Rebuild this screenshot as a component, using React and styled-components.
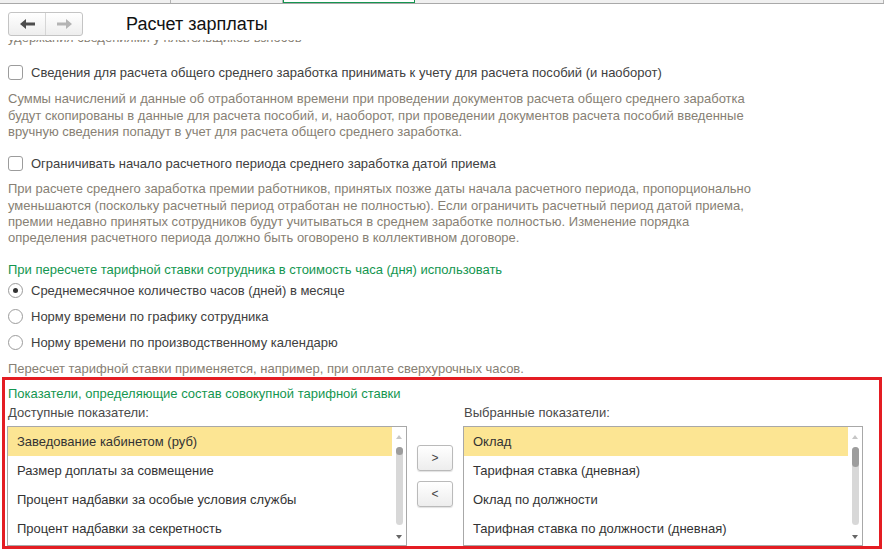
import React from 'react';
import styled, { createGlobalStyle, css } from 'styled-components';

const GlobalStyle = createGlobalStyle`
  html, body {
    margin: 0;
    padding: 0;
    background: #fff;
  }
  body {
    font-family: "Liberation Sans", Arial, sans-serif;
    font-size: 13px;
    color: #404040;
    overflow: hidden;
  }
`;

const GREEN = '#149650';
const HINT = '#877f74';

const Page = styled.div`
  width: 884px;
  height: 558px;
  display: flex;
  flex-direction: column;
  overflow: hidden;
  background: #fff;
`;

const TabStrip = styled.div`
  display: flex;
  height: 3px;
  background: #f0f0f0;
  border-bottom: 1px solid #a9a9a9;
`;

const Tab = styled.div`
  width: ${p => (p.$w ? `${p.$w}px` : 'auto')};
  flex: ${p => (p.$w ? 'none' : '1')};
  border-right: 1px solid #b4b4b4;
  ${p => p.$active && css`
    background: #fff;
    border-left: 1px solid ${GREEN};
    border-right: 1px solid ${GREEN};
    border-bottom: 1px solid ${GREEN};
    margin-right: 2px;
  `}
`;

const Header = styled.div`
  box-sizing: border-box;
  height: 36px;
  padding: 4px 8px 0;
  display: flex;
  align-items: center;
  gap: 43px;
`;

const NavGroup = styled.div`
  display: flex;
  height: 24px;
  box-sizing: border-box;
  border: 1px solid #c4c4c4;
  border-radius: 3px;
  background: linear-gradient(#ffffff, #eeeeee);
`;

const NavButton = styled.div`
  width: 36px;
  display: flex;
  align-items: center;
  justify-content: center;
  & + & {
    border-left: 1px solid #d6d6d6;
  }
`;

const Title = styled.div`
  font-size: 18px;
  color: #111;
`;

const Content = styled.div`
  flex: 1;
  overflow: hidden;
  padding: 0 8px;
  display: flex;
  flex-direction: column;
`;

const Hint = styled.div`
  color: ${HINT};
  line-height: 16.33px;
  margin-top: ${p => p.$mt || 0}px;
  white-space: nowrap;
`;

const OptionRow = styled.label`
  display: flex;
  align-items: center;
  gap: 8px;
  height: ${p => p.$h || 18}px;
  margin-top: ${p => p.$mt || 0}px;
  color: #404040;
`;

const CheckBox = styled.span`
  width: 15px;
  height: 15px;
  box-sizing: border-box;
  border: 1px solid #9c9c9c;
  border-radius: 3px;
  background: #fff;
`;

const Radio = styled.span`
  width: 15px;
  height: 15px;
  box-sizing: border-box;
  border: 1px solid #9c9c9c;
  border-radius: 50%;
  background: #fff;
  display: flex;
  align-items: center;
  justify-content: center;
  &::after {
    content: '';
    width: 5px;
    height: 5px;
    border-radius: 50%;
    background: ${p => (p.$checked ? '#333' : 'transparent')};
  }
`;

const GroupTitle = styled.div`
  color: ${GREEN};
  line-height: 16px;
  margin-top: ${p => p.$mt || 0}px;
  padding-left: ${p => p.$pl || 0}px;
`;

const Panel = styled.div`
  margin: 0 -6px;
  border: 3px solid #e41d23;
  padding: 6px 16px 0 2px;
`;

const Columns = styled.div`
  display: grid;
  grid-template-columns: 400px 36px 400px;
  column-gap: 10px;
  margin-top: 3px;
`;

const ListColumn = styled.div`
  display: flex;
  flex-direction: column;
`;

const ListLabel = styled.div`
  line-height: 16px;
  padding-left: 1px;
  color: #4a4a4a;
`;

const ListBox = styled.div`
  margin-top: 5px;
  height: 120px;
  box-sizing: border-box;
  border: 1px solid #a8a8a8;
  display: flex;
  background: #fff;
`;

const Rows = styled.div`
  flex: 1;
  display: flex;
  flex-direction: column;
`;

const Row = styled.div`
  height: 29px;
  flex: none;
  display: flex;
  align-items: center;
  padding-left: 9px;
  color: #333;
  background: ${p => (p.$selected ? '#fce593' : 'transparent')};
`;

const ScrollBar = styled.div`
  width: 14px;
  display: flex;
  flex-direction: column;
  align-items: center;
`;

const Arrow = styled.span`
  width: 0;
  height: 0;
  border-left: 3px solid transparent;
  border-right: 3px solid transparent;
  ${p => (p.$up
    ? css`border-bottom: 4px solid #c6c6c6; margin-top: 8px;`
    : css`border-top: 4px solid #666; margin-bottom: 6px;`)}
`;

const Track = styled.div`
  flex: 1;
  width: 7px;
  margin: 8px 0 10px;
  border-radius: 4px;
  background: #d8d8d8;
`;

const Thumb = styled.div`
  height: ${p => p.$h}px;
  border-radius: 4px;
  background: #9d9d9d;
`;

const MoveButtons = styled.div`
  padding-top: 40px;
  display: flex;
  flex-direction: column;
  gap: 10px;
`;

const MoveButton = styled.div`
  height: 26px;
  box-sizing: border-box;
  border: 1px solid #bababa;
  border-radius: 3px;
  background: linear-gradient(#ffffff, #ededed);
  box-shadow: 0 1px 1px rgba(0, 0, 0, 0.12);
  display: flex;
  align-items: center;
  justify-content: center;
  font-size: 12px;
  color: #444;
`;

const ArrowIcon = ({ dir, color }) => (
  <svg width="15" height="10" viewBox="0 0 15 10">
    <polygon
      fill={color}
      transform={dir === 'right' ? 'matrix(-1 0 0 1 15 0)' : undefined}
      points="0,5 6,0 6,3.5 15,3.5 15,6.5 6,6.5 6,10"
    />
  </svg>
);

const List = ({ label, items, thumb }) => (
  <ListColumn>
    <ListLabel>{label}</ListLabel>
    <ListBox>
      <Rows>
        {items.map((item, i) => (
          <Row key={item} $selected={i === 0}>{item}</Row>
        ))}
      </Rows>
      <ScrollBar>
        <Arrow $up />
        <Track>
          <Thumb $h={thumb} />
        </Track>
        <Arrow />
      </ScrollBar>
    </ListBox>
  </ListColumn>
);

const lines = text => text.map((line, i) => (
  <React.Fragment key={i}>
    {i > 0 && <br />}
    {line}
  </React.Fragment>
));

const available = [
  'Заведование кабинетом (руб)',
  'Размер доплаты за совмещение',
  'Процент надбавки за особые условия службы',
  'Процент надбавки за секретность',
];

const selected = [
  'Оклад',
  'Тарифная ставка (дневная)',
  'Оклад по должности',
  'Тарифная ставка по должности (дневная)',
];

export default function App() {
  return (
    <Page>
      <GlobalStyle />
      <TabStrip>
        <Tab $w={170} />
        <Tab $w={111} />
        <Tab $w={130} $active />
        <Tab />
      </TabStrip>

      <Header>
        <NavGroup>
          <NavButton><ArrowIcon dir="left" color="#4d4d4d" /></NavButton>
          <NavButton><ArrowIcon dir="right" color="#b4b4b4" /></NavButton>
        </NavGroup>
        <Title>Расчет зарплаты</Title>
      </Header>

      <Content>
        {/* last line of the previous block, scrolled up under the header */}
        <Hint $mt={-10}>удержания сведениями у плательщиков взносов</Hint>

        <OptionRow $mt={17}>
          <CheckBox />
          Сведения для расчета общего среднего заработка принимать к учету для расчета пособий (и наоборот)
        </OptionRow>
        <Hint $mt={10}>
          {lines([
            'Суммы начислений и данные об отработанном времени при проведении документов расчета общего среднего заработка',
            'будут скопированы в данные для расчета пособий, и, наоборот, при проведении документов расчета пособий введенные',
            'вручную сведения попадут в учет для расчета общего среднего заработка.',
          ])}
        </Hint>

        <OptionRow $mt={14}>
          <CheckBox />
          Ограничивать начало расчетного периода среднего заработка датой приема
        </OptionRow>
        <Hint $mt={9}>
          {lines([
            'При расчете среднего заработка премии работников, принятых позже даты начала расчетного периода, пропорционально',
            'уменьшаются (поскольку расчетный период отработан не полностью). Если ограничить расчетный период датой приема,',
            'премии недавно принятых сотрудников будут учитываться в среднем заработке полностью. Изменение порядка',
            'определения расчетного периода должно быть оговорено в коллективном договоре.',
          ])}
        </Hint>

        <GroupTitle $mt={15}>При пересчете тарифной ставки сотрудника в стоимость часа (дня) использовать</GroupTitle>
        <OptionRow $h={26}>
          <Radio $checked />
          Среднемесячное количество часов (дней) в месяце
        </OptionRow>
        <OptionRow $h={26}>
          <Radio />
          Норму времени по графику сотрудника
        </OptionRow>
        <OptionRow $h={26}>
          <Radio />
          Норму времени по производственному календарю
        </OptionRow>
        <Hint $mt={5}>Пересчет тарифной ставки применяется, например, при оплате сверхурочных часов.</Hint>

        <Panel>
          <GroupTitle $pl={1}>Показатели, определяющие состав совокупной тарифной ставки</GroupTitle>
          <Columns>
            <List label="Доступные показатели:" items={available} thumb={8} />
            <MoveButtons>
              <MoveButton>&gt;</MoveButton>
              <MoveButton>&lt;</MoveButton>
            </MoveButtons>
            <List label="Выбранные показатели:" items={selected} thumb={20} />
          </Columns>
        </Panel>
      </Content>
    </Page>
  );
}
